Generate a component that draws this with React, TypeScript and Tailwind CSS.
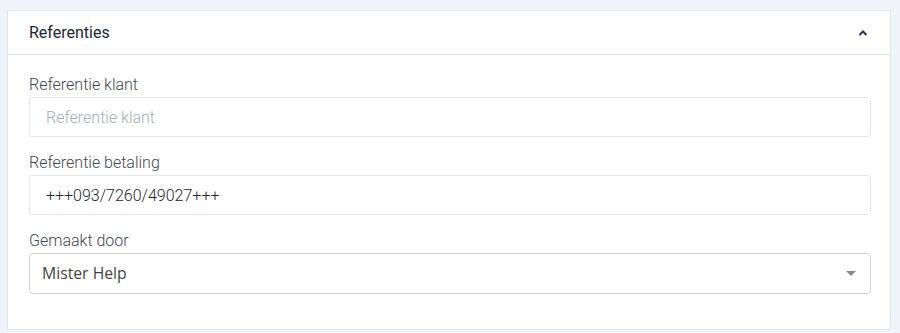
import React from "react";

export default function App() {
  return (
    <div className="w-[900px] h-[333px] bg-[#f0f3f7] pt-[10px] pl-[7px]" style={{ fontFamily: "Roboto, 'Liberation Sans', sans-serif" }}>
      <div className="w-[884px] h-[320px] bg-white border border-[#e1e5eb] flex flex-col">
        <div className="h-[44px] border-b border-[#e1e5eb] flex items-center justify-between pl-[21px] pr-[22px]">
          <span className="text-[16px] text-[#1f2633]">Referenties</span>
          <svg width="10" height="8" viewBox="0 0 10 8" className="mt-[1px]">
            <path d="M1.5 6 L5 2.5 L8.5 6" fill="none" stroke="#2b3452" strokeWidth="2" />
          </svg>
        </div>
        <div className="pl-[21px] pr-[19px] pt-[20px] flex flex-col">
          <label className="h-[20px] leading-[20px] text-[16px] font-light text-[#3f4654]">Referentie klant</label>
          <input
            className="mt-[2px] h-[40px] border border-[#e3e8ef] rounded-[3px] px-[16px] text-[16px] font-light text-[#2d3748] placeholder:text-[#a3adbd] outline-none"
            placeholder="Referentie klant"
          />
          <label className="mt-[16px] h-[20px] leading-[20px] text-[16px] font-light text-[#3f4654]">Referentie betaling</label>
          <input
            className="mt-[2px] h-[40px] border border-[#e3e8ef] rounded-[3px] px-[16px] text-[16px] font-light text-[#1f2633] outline-none"
            defaultValue="+++093/7260/49027+++"
          />
          <label className="mt-[16px] h-[20px] leading-[20px] text-[16px] font-light text-[#3f4654]">Gemaakt door</label>
          <div className="mt-[2px] h-[41px] border border-[#d3d3d3] rounded-[4px] pl-[12px] pr-[14px] flex items-center justify-between">
            <span className="text-[15.75px] text-[#444]" style={{ fontFamily: "'Open Sans', 'Noto Sans', sans-serif" }}>Mister Help</span>
            <svg width="10" height="5" viewBox="0 0 10 5">
              <path d="M0 0 L10 0 L5 5 Z" fill="#888" />
            </svg>
          </div>
        </div>
      </div>
    </div>
  );
}
